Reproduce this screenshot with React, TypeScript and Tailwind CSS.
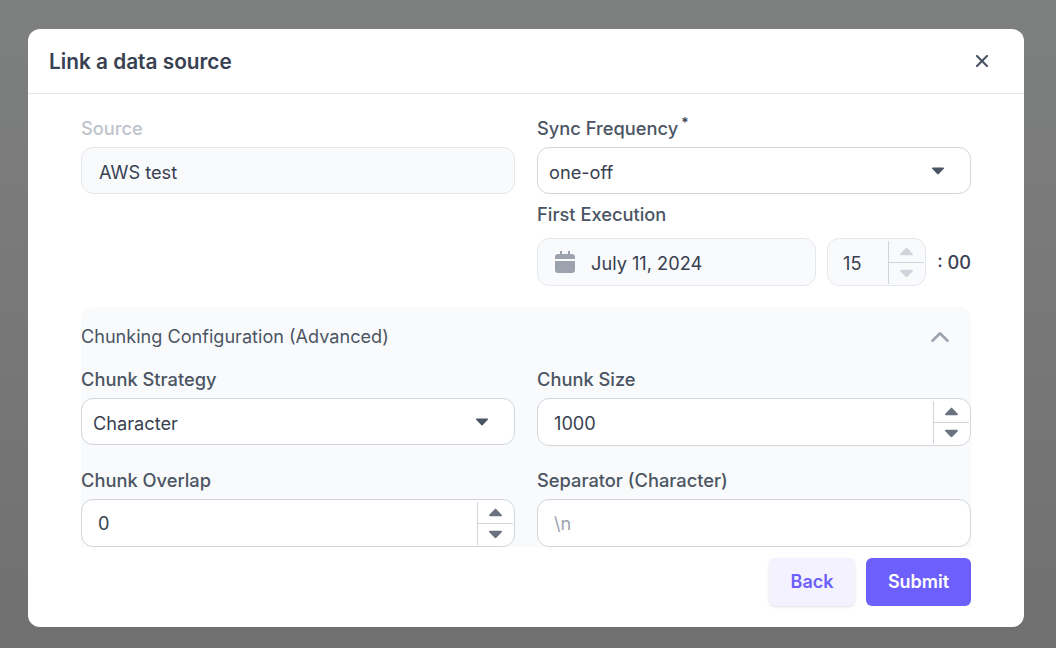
import React from 'react';
import { X, ChevronUp } from 'lucide-react';

const Caret = ({ up, className }: { up?: boolean; className: string }) => (
  <svg viewBox="0 0 14 8" className={className} fill="currentColor">
    <path d={up ? 'M7 .6c.3 0 .6.1.8.4l5 5.2c.5.6.2 1.4-.6 1.4H1.8c-.8 0-1.1-.8-.6-1.4l5-5.2c.2-.3.5-.4.8-.4z' : 'M7 7.4c-.3 0-.6-.1-.8-.4l-5-5.2C.7 1.2 1 .4 1.8.4h10.4c.8 0 1.1.8.6 1.4l-5 5.2c-.2.3-.5.4-.8.4z'} />
  </svg>
);

const Label = ({ children, className = '' }: { children: React.ReactNode; className?: string }) => (
  <div className={`text-[18.3px] leading-6 font-medium text-[#4b5563] ${className}`}>{children}</div>
);

const Stepper = ({ muted }: { muted?: boolean }) => (
  <div className={`flex flex-col w-[36px] h-[43px] self-center border-l border-[#d1d5db] ${muted ? 'text-[#d1d5db]' : 'text-[#6b7280]'}`}>
    <div className="flex-1 flex items-center justify-center border-b border-[#d1d5db]">
      <Caret up className="w-[15px] h-[9px]" />
    </div>
    <div className="flex-1 flex items-center justify-center">
      <Caret className="w-[15px] h-[9px]" />
    </div>
  </div>
);

const Select = ({ value }: { value: string }) => (
  <div className="h-[47px] flex items-center justify-between rounded-xl border border-[#d1d5db] bg-white pl-[11px] pr-[25px]">
    <span className="pt-[4px] text-[18.2px] text-[#374151]">{value}</span>
    <Caret className="w-[14px] h-[8px] text-[#4b5563]" />
  </div>
);

const NumberField = ({ value, textPad }: { value: string; textPad: string }) => (
  <div className="h-[48px] flex items-center justify-between rounded-xl border border-[#d1d5db] bg-white pl-[16px] pr-[1px]">
    <span className={`${textPad} text-[18.2px] text-[#374151]`}>{value}</span>
    <Stepper />
  </div>
);

export default function App() {
  return (
    <div className="w-[1056px] h-[648px] pt-[29px] pl-[28px] pr-[32px] bg-[linear-gradient(#7e807f,#6f706f)] font-['Inter',sans-serif]">
      <div className="h-[598px] bg-white rounded-xl">
        <div className="h-[65px] flex items-center justify-between pl-[21px] pr-[32px] border-b border-[#e5e7eb]">
          <h2 className="pt-[1px] text-[20.8px] font-semibold text-[#374151]">Link a data source</h2>
          <X className="w-[20px] h-[20px] text-[#4b5563]" strokeWidth={2.6} />
        </div>

        <div className="px-[53px]">
          <div className="grid grid-cols-2 gap-x-[22px] pt-[22px]">
            <div>
              <Label className="text-[#bfc3cb] mb-[7px]">Source</Label>
              <div className="h-[47px] flex items-center rounded-xl border border-[#e5e7eb] bg-[#f9fafc] pt-[4px] px-[17px] text-[18.2px] text-[#374151]">
                AWS test
              </div>
            </div>
            <div>
              <Label className="mb-[7px]">
                Sync Frequency<sup className="ml-[3px] text-[14px] text-[#374151]">*</sup>
              </Label>
              <Select value="one-off" />
              <Label className="mt-[8px] mb-[12px]">First Execution</Label>
              <div className="flex items-center">
                <div className="w-[279px] h-[48px] flex items-center rounded-xl border border-[#e5e7eb] bg-[#f9fafc] pl-[17px]">
                  <svg viewBox="0 0 20 22" className="w-[20px] h-[22px] text-[#9ca3af]" fill="currentColor">
                    <path d="M5 0h2v3h6V0h2v3h2a3 3 0 0 1 3 3v2H0V6a3 3 0 0 1 3-3h2V0zM0 10h20v9a3 3 0 0 1-3 3H3a3 3 0 0 1-3-3v-9z" />
                  </svg>
                  <span className="ml-[16px] pt-[3px] text-[18.2px] text-[#374151]">July 11, 2024</span>
                </div>
                <div className="ml-[11px] w-[99px] h-[48px] flex items-center justify-between rounded-xl border border-[#e5e7eb] bg-[#f9fafc] pl-[15px] pr-[1px]">
                  <span className="pt-[3px] text-[18.2px] text-[#374151]">15</span>
                  <Stepper muted />
                </div>
                <span className="ml-auto pt-[1px] text-[18.2px] font-medium text-[#374151]">: 00</span>
              </div>
            </div>
          </div>

          <div className="mt-[21px] h-[240px] overflow-hidden rounded-t-xl bg-[#f9fafc]">
            <div className="h-[60px] flex items-center justify-between pr-[16px]">
              <span className="text-[18.1px] text-[#4b5563]">Chunking Configuration (Advanced)</span>
              <ChevronUp className="w-[30px] h-[30px] text-[#9ca3af]" strokeWidth={2} />
            </div>
            <div className="grid grid-cols-2 gap-x-[22px]">
              <div>
                <Label className="mb-[7px]">Chunk Strategy</Label>
                <Select value="Character" />
              </div>
              <div>
                <Label className="mb-[7px]">Chunk Size</Label>
                <NumberField value="1000" textPad="pt-[4px]" />
              </div>
              <div className="mt-[22px]">
                <Label className="mb-[7px]">Chunk Overlap</Label>
                <NumberField value="0" textPad="pt-[2px]" />
              </div>
              <div className="mt-[22px]">
                <Label className="mb-[7px]">Separator (Character)</Label>
                <div className="h-[48px] flex items-center rounded-xl border border-[#d1d5db] bg-white pt-[2px] pl-[16px] text-[18.2px] text-[#9ca3af]">
                  {'\\n'}
                </div>
              </div>
            </div>
          </div>

          <div className="mt-[11px] flex justify-end gap-[11px]">
            <button className="w-[86px] h-[48px] pb-[2px] rounded-md bg-[#f3f2fe] text-[18px] font-semibold text-[#6c5ffc] shadow-sm">Back</button>
            <button className="w-[105px] h-[48px] pb-[2px] rounded-md bg-[#6c5ffc] text-[18px] font-semibold text-white">Submit</button>
          </div>
        </div>
      </div>
    </div>
  );
}
